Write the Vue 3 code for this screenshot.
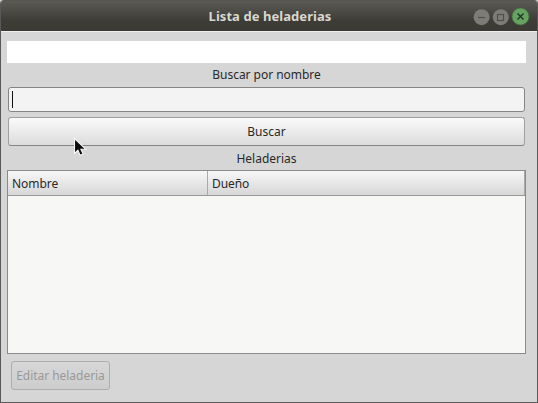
<script setup>
import { ref } from 'vue'

const name = ref('')
const columns = ['Nombre', 'Dueño']
</script>

<template>
  <main class="window">
    <header class="titlebar">
      <h1>Lista de heladerias</h1>
      <div class="controls">
        <svg width="60" height="22" viewBox="0 0 60 22">
          <circle cx="9.6" cy="11.2" r="8" fill="#7d7c75" />
          <path d="M6 11.5h7" stroke="#504f48" stroke-width="1.2" />
          <circle cx="28.8" cy="11.2" r="8" fill="#7d7c75" />
          <rect x="25.5" y="8.5" width="6" height="6" fill="none" stroke="#504f48" stroke-width="1.2" />
          <circle cx="48.5" cy="10.5" r="8.5" fill="#66a261" stroke="#427044" stroke-width=".8" />
          <path d="M45.5 7.5l6 6m0-6l-6 6" stroke="#203421" stroke-width="1.4" />
        </svg>
      </div>
    </header>
    <section class="content">
      <div class="message"></div>
      <label class="search-label" for="name">Buscar por nombre</label>
      <div class="entry"><span class="caret"></span><input id="name" v-model="name" /></div>
      <button class="search">Buscar</button>
      <div class="list-label">Heladerias</div>
      <div class="table">
        <div class="head">
          <div v-for="column in columns" :key="column">{{ column }}</div>
        </div>
      </div>
      <button class="edit" disabled>Editar heladeria</button>
    </section>
    <svg class="pointer" width="15" height="21" viewBox="0 0 15 21">
      <path d="M1.5 1.5v15l3.4-3.2 2.2 5 3-1.4-2.2-4.7h4.8z" fill="#0c0c0c" stroke="#f7f7f7" stroke-width="1.1" />
    </svg>
  </main>
</template>

<style>
body { margin: 0; background: #d6d6d6; overflow: hidden; }
</style>

<style scoped>
* { box-sizing: border-box; }
.window {
  position: relative;
  width: 538px;
  height: 403px;
  overflow: hidden;
  border: 1px solid #595959;
  border-top: 0;
  border-radius: 4px 4px 0 0;
  background: #d6d6d6;
  font: 12px/16px "Noto Sans", sans-serif;
  color: #292929;
}
.titlebar {
  display: grid;
  grid-template-columns: 65px 1fr 65px;
  height: 31px;
  border-top: 1px solid #565650;
  background: linear-gradient(#5b5a53, #3d3c37 65%, #3b3a35);
}
h1 {
  grid-column: 2;
  margin: 0;
  padding: 6px 0 0 2px;
  text-align: center;
  font-size: 13px;
  line-height: 18px;
  font-weight: 700;
  letter-spacing: .06px;
  color: #d9d8cf;
}
.controls { padding-top: 5px; }
.controls svg { display: block; }
.content {
  display: flex;
  flex-direction: column;
  height: 371px;
  padding: 9px 11px 0 6px;
  border-top: 1px solid #eee;
}
.message { height: 22px; background: #fff; }
.search-label { height: 16px; margin-top: 4px; text-align: center; letter-spacing: -.04px; }
.entry {
  display: flex;
  align-items: center;
  height: 25px;
  margin: 4px 1px 0;
  padding: 0 3px;
  border: 1px solid #858585;
  border-radius: 3px;
  background: #f3f3f3;
}
.caret { width: 1px; height: 17px; background: #111; }
input { flex: 1; min-width: 0; border: 0; outline: 0; background: transparent; font: inherit; }
button { padding: 0; font: inherit; color: inherit; }
.search {
  height: 29px;
  margin: 5px 1px 0;
  border: 1px solid #a0a0a0;
  border-bottom-color: #858585;
  border-radius: 3px;
  background: linear-gradient(#fafafa, #dcdcdc);
}
.list-label { height: 16px; margin-top: 5px; text-align: center; }
.table { height: 184px; margin-top: 3px; border: 1px solid #8b8b8b; background: #f7f7f6; }
.head {
  display: grid;
  grid-template-columns: 200px 1fr;
  height: 25px;
  border-bottom: 1px solid #999;
  background: linear-gradient(#f7f7f7, #d7d7d7);
}
.head div { padding: 5px 4px 3px; border-right: 1px solid #aaa; letter-spacing: -.06px; }
.edit {
  width: 99px;
  height: 29px;
  margin: 7px 0 0 4px;
  border: 1px solid #adadad;
  border-radius: 3px;
  background: linear-gradient(#d7d7d7, #cdcdcd);
  color: #999;
  letter-spacing: -.04px;
}
.pointer { position: absolute; left: 72px; top: 137px; }
</style>
